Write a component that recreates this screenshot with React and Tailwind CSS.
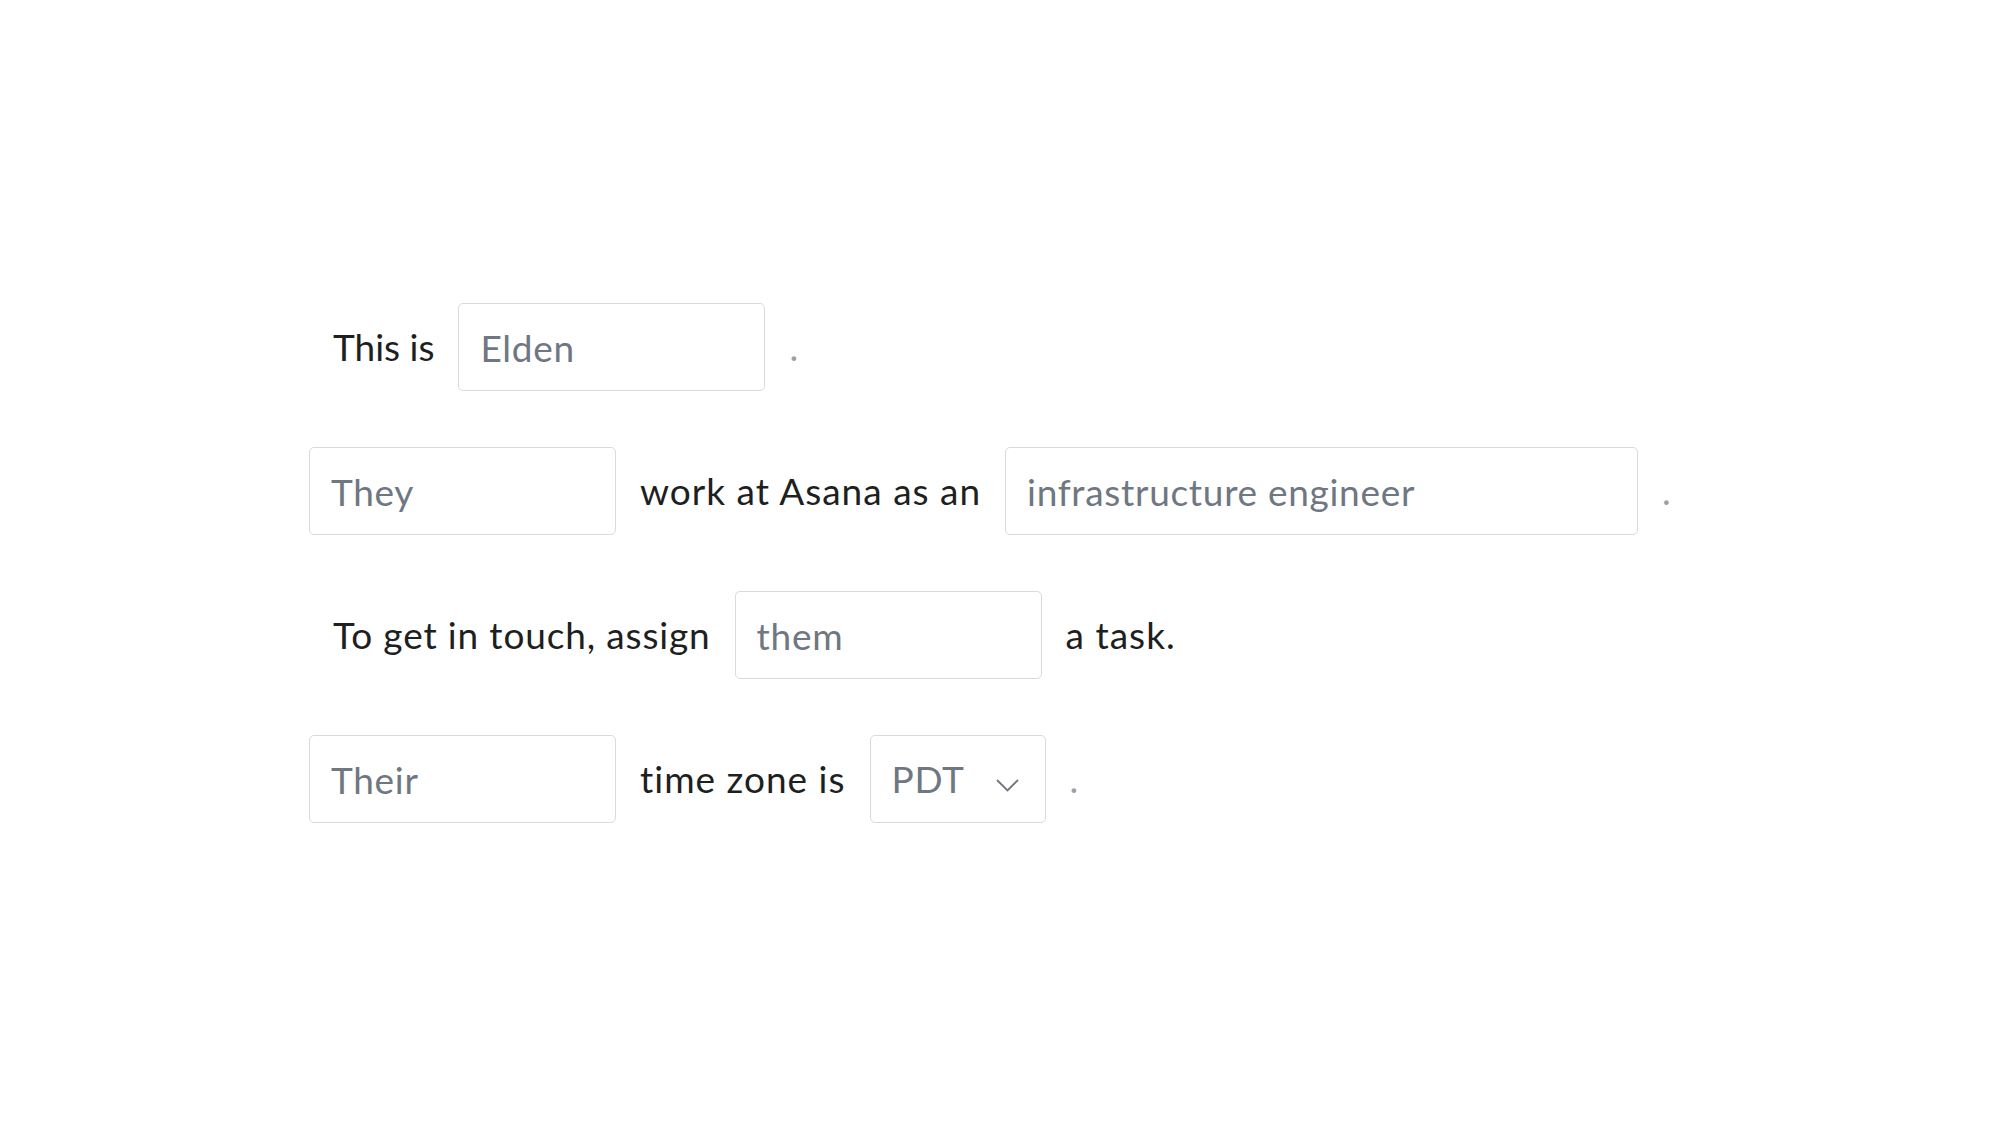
const Field = ({ value, width }) => (
  <input
    readOnly
    value={value}
    className={`h-[88px] ${width} shrink-0 rounded-[5px] border border-[#d9dadc] bg-white px-[21px] text-[37px] tracking-[0.7px] text-[#6f7782] outline-none font-['Lato',sans-serif]`}
  />
);

const Label = ({ children, tracking = 'tracking-[1px]' }) => (
  <span className={`px-6 text-[37px] ${tracking} text-[#1e1f21] whitespace-nowrap`}>{children}</span>
);

const Dot = () => <span className="px-6 text-[37px] text-[#9ca0a6]">.</span>;

const Row = ({ children }) => <div className="flex items-center h-[88px]">{children}</div>;

export default function App() {
  return (
    <div className="w-[2000px] h-[1125px] bg-white font-['Lato',sans-serif]">
      <div className="flex flex-col gap-[56px] pl-[309px] pt-[303px]">
        <Row>
          <Label tracking="tracking-[0px]">This is</Label>
          <Field value="Elden" width="w-[307px]" />
          <Dot />
        </Row>
        <Row>
          <Field value="They" width="w-[307px]" />
          <Label>work at Asana as an</Label>
          <Field value="infrastructure engineer" width="w-[633px]" />
          <Dot />
        </Row>
        <Row>
          <Label tracking="tracking-[0.85px]">To get in touch, assign</Label>
          <Field value="them" width="w-[307px]" />
          <Label>a task.</Label>
        </Row>
        <Row>
          <Field value="Their" width="w-[307px]" />
          <Label>time zone is</Label>
          <div className="flex h-[88px] w-[176px] shrink-0 items-center justify-between rounded-[5px] border border-[#d9dadc] bg-white pl-[21px] pr-[26px] text-[37px] tracking-[0.7px] text-[#6f7782]">
            <span>PDT</span>
            <svg width="23" height="13" viewBox="0 0 23 13" className="mt-[12px]" fill="none">
              <path d="M1 1 L11.5 11.5 L22 1" stroke="#6f7782" strokeWidth="1.8" />
            </svg>
          </div>
          <Dot />
        </Row>
      </div>
    </div>
  );
}
